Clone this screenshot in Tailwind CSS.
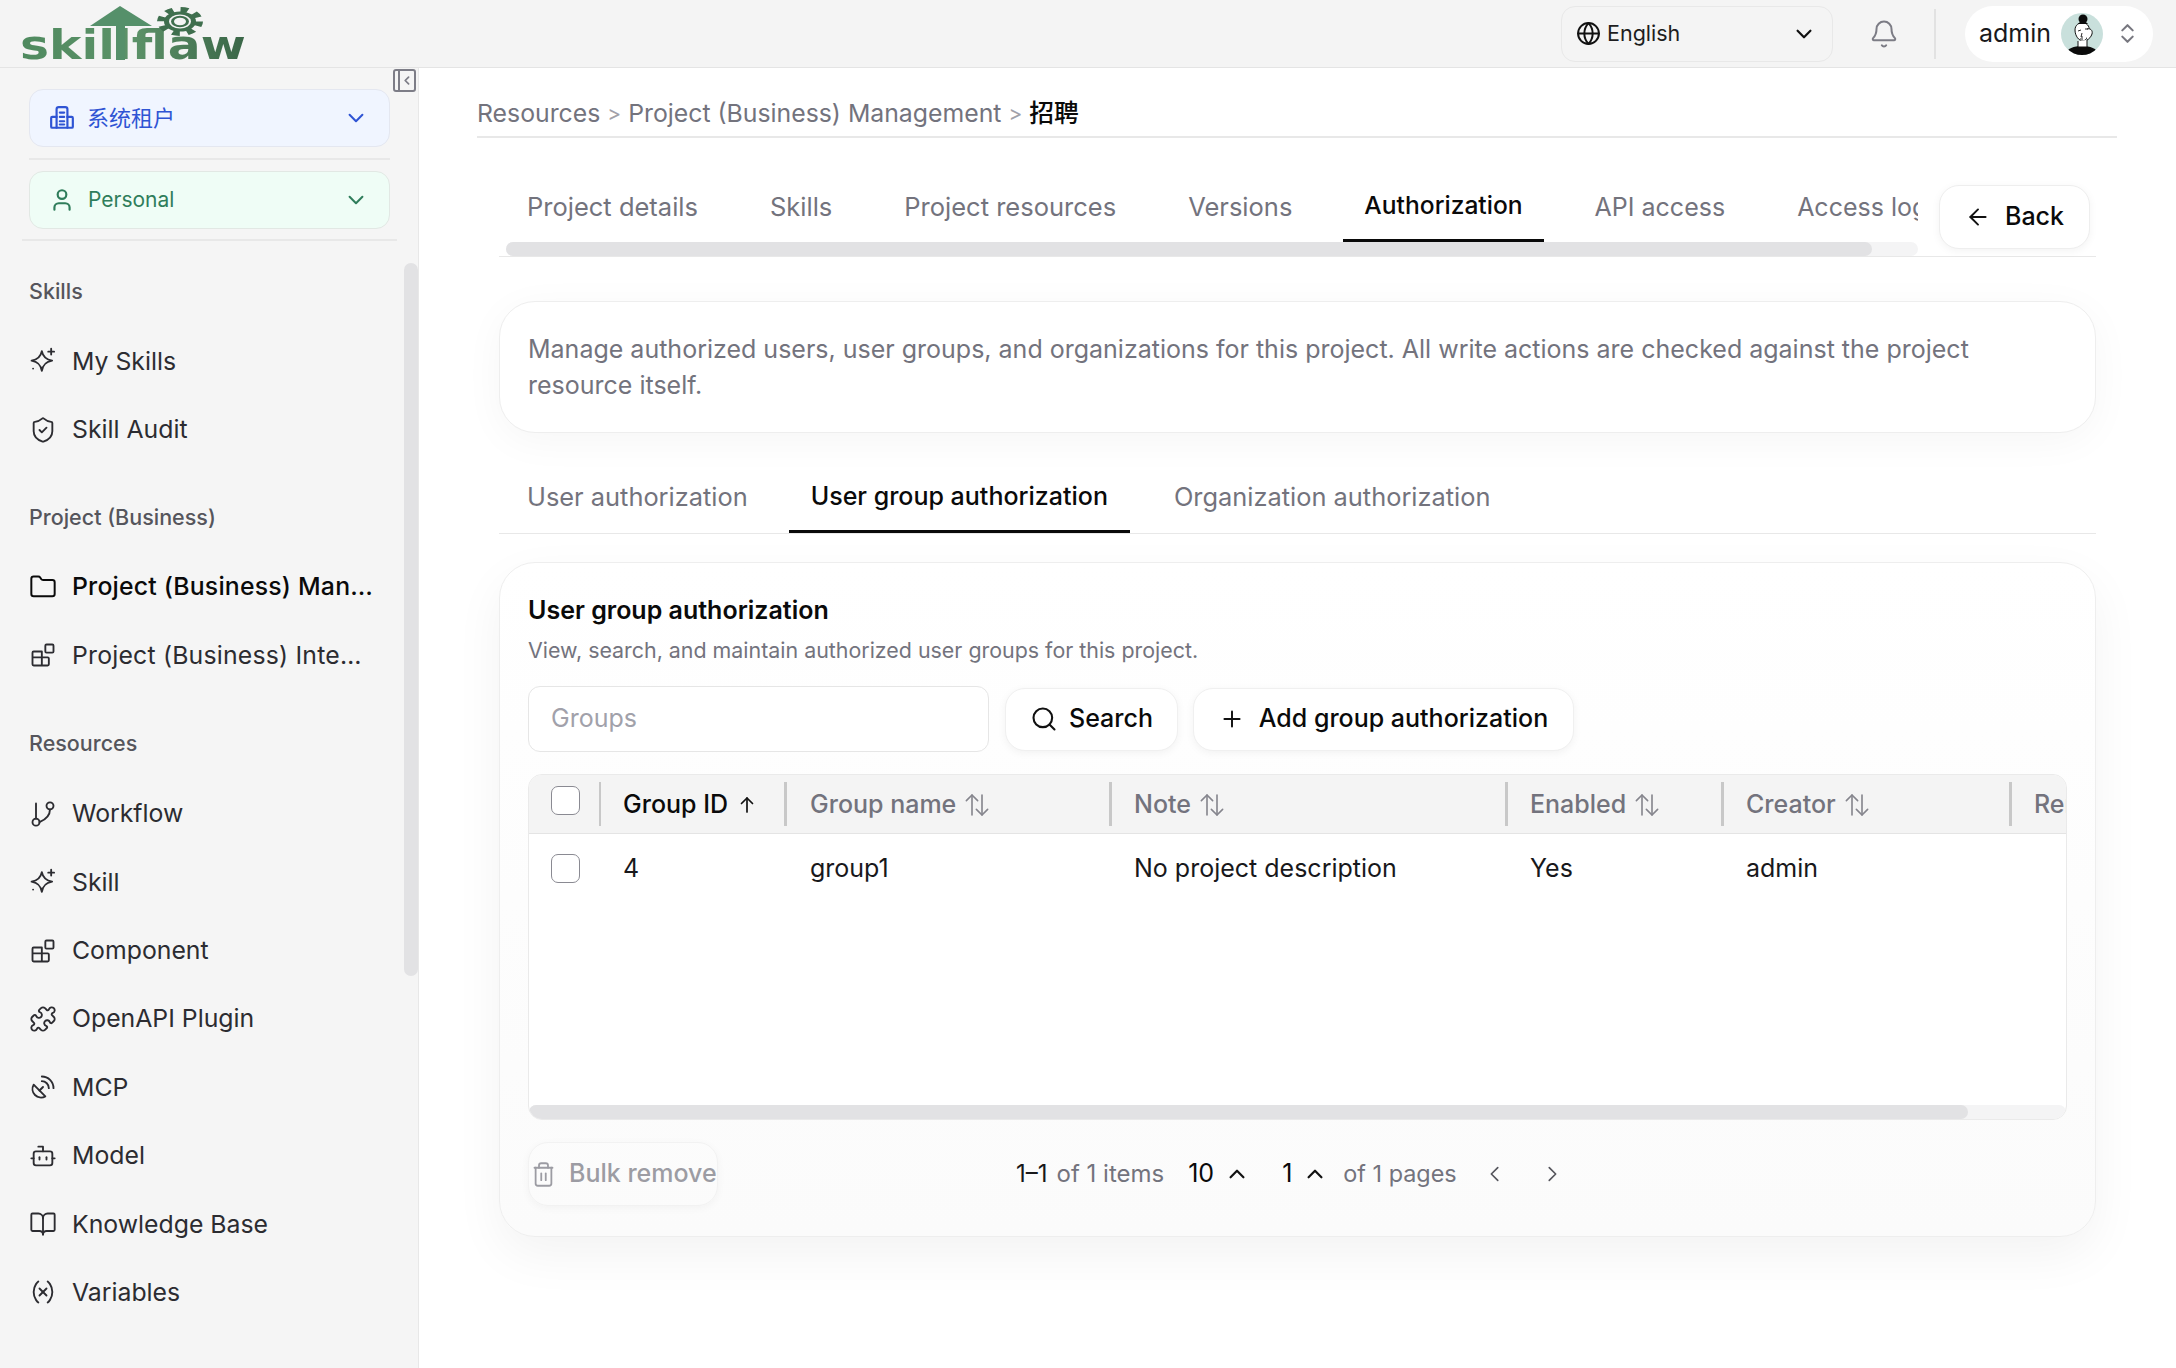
<!DOCTYPE html>
<html lang="en">
<head>
<meta charset="UTF-8">
<title>Authorization</title>
<script src="https://cdn.jsdelivr.net/npm/@tailwindcss/browser@4"></script>
</head>
<body class="h-screen overflow-hidden bg-white text-[#18181b] font-['Inter','Noto_Sans_CJK_SC',sans-serif]">

<!-- top bar -->
<header class="h-[68px] bg-[#f4f4f4] border-b border-[#e4e4e4] flex items-center relative">
  <div class="relative w-[250px] h-[67px] ml-[20px] shrink-0">
    <span class="absolute left-0 top-[20px] origin-left scale-x-[1.22] text-[40px] leading-[50px] font-bold font-['DejaVu_Sans',sans-serif] text-transparent bg-clip-text bg-gradient-to-r from-[#4f8a5f] via-[#5c9268] to-[#3a6647]">skillflaw</span>
    <svg class="absolute left-0 top-0" width="230" height="62" viewBox="0 0 230 62">
      <path d="M70 26 100 6l32 20h-27v34h-9V26z" fill="#55906a"/>
      <g transform="translate(160 21.500) scale(1 .63)" fill="none">
        <circle r="19" stroke="#3f6f4e" stroke-width="8" stroke-dasharray="7.400 7.520"/>
        <circle r="16" fill="#3f6f4e"/>
        <circle r="11" fill="#f4f4f4"/>
        <circle r="7.500" stroke="#3f6f4e" stroke-width="3"/>
      </g>
    </svg>
  </div>
  <div class="ml-auto flex items-center h-full">
    <div class="w-[272px] h-[56px] rounded-[14px] border border-[#e8e8e8] flex items-center pl-[14px] pr-[17px] text-[21.5px] text-[#1d1d20]">
      <svg class="size-[25px] mr-[6px]" viewBox="0 0 24 24" fill="none" stroke="#111" stroke-width="1.9" stroke-linecap="round" stroke-linejoin="round"><circle cx="12" cy="12" r="10"/><path d="M12 2a14.500 14.500 0 0 0 0 20 14.500 14.500 0 0 0 0-20"/><path d="M2 12h20"/></svg>
      <span>English</span>
      <svg class="size-[22px] ml-auto" viewBox="0 0 24 24" fill="none" stroke="#111" stroke-width="2.4" stroke-linecap="round" stroke-linejoin="round"><path d="m5 8.500 7 7 7-7"/></svg>
    </div>
    <svg class="size-[30px] ml-[36px]" viewBox="0 0 24 24" fill="none" stroke="#7c7c85" stroke-width="1.6" stroke-linecap="round" stroke-linejoin="round"><path d="M10.268 21a2 2 0 0 0 3.464 0"/><path d="M3.262 15.326A1 1 0 0 0 4 17h16a1 1 0 0 0 .74-1.673C19.410 13.956 18 12.499 18 8A6 6 0 0 0 6 8c0 4.499-1.411 5.956-2.738 7.326"/></svg>
    <div class="w-[2px] h-[50px] bg-[#e2e2e2] ml-[35px] mr-[29px]"></div>
    <div class="w-[188px] h-[56px] rounded-[28px] bg-white flex items-center pl-[14px] mr-[23px]">
      <span class="text-[25px] leading-none w-[82px]">admin</span>
      <svg class="size-[42px]" viewBox="0 0 42 42">
        <defs><clipPath id="av"><circle cx="21" cy="21" r="21"/></clipPath></defs>
        <g clip-path="url(#av)">
          <rect width="42" height="42" fill="#c9e0dc"/>
          <path d="M4 42c2-7 9-9 17-9s15 2 17 9z" fill="#0b0b0b"/>
          <path d="M14 17c0-5 4-8 9-7 4 1 6 4 5 9-1 4-2 8-6 9-4 0-8-5-8-11z" fill="#fff" stroke="#111" stroke-width="1"/>
          <path d="M26 16c3-1 6 1 5 5-1 3-3 5-5 6M17 28v6h9v-7" fill="#fff" stroke="#111" stroke-width="1"/>
          <path d="M17 18l3-1M24 16l3 0M21 20l-1 4 2 0M19 26l3 0" stroke="#111" stroke-width=".9" fill="none"/>
          <circle cx="22" cy="6" r="4.500" fill="#0b0b0b"/>
          <path d="M17 11c2-3 8-3 10 0z" fill="#0b0b0b"/>
        </g>
      </svg>
      <svg class="size-[25px] ml-[12px]" viewBox="0 0 24 24" fill="none" stroke="#77777f" stroke-width="2" stroke-linecap="round" stroke-linejoin="round"><path d="m7 15 5 5 5-5"/><path d="m7 9 5-5 5 5"/></svg>
    </div>
  </div>
</header>

<div class="flex h-[1300px]">
  <!-- sidebar -->
  <aside class="w-[419px] shrink-0 bg-[#f5f5f5] border-r border-[#e8e8e8] relative overflow-hidden">
    <button class="absolute right-[2px] top-[1px] size-[23px] rounded-[3px] border-2 border-[#7d7d87] flex overflow-hidden">
      <span class="w-[6px] h-full border-r-2 border-[#7d7d87]"></span>
      <svg class="size-[17px] mt-[1px]" viewBox="0 0 24 24" fill="none" stroke="#7d7d87" stroke-width="3" stroke-linecap="round" stroke-linejoin="round"><path d="m15 6-6 6 6 6"/></svg>
    </button>
    <div class="absolute right-0 top-[195px] w-[14px] h-[713px] rounded-[7px] bg-[#e2e2e4]"></div>

    <div class="ml-[29px] mr-[28px] mt-[21px] h-[58px] rounded-[14px] bg-[#f0f5ff] border border-[#e4e7f0] flex items-center pl-[19px] pr-[22px] text-[#2f54d4] text-[22px]">
      <svg class="size-[26px] mr-[12px]" viewBox="0 0 24 24" fill="none" stroke="#2f54d4" stroke-width="2" stroke-linecap="round" stroke-linejoin="round"><path d="M7 21V4a2 2 0 0 1 2-2h6a2 2 0 0 1 2 2v17"/><path d="M7 11H3a1 1 0 0 0-1 1v8a1 1 0 0 0 1 1h18a1 1 0 0 0 1-1v-8a1 1 0 0 0-1-1h-4"/><path d="M10 7h4M10 11h4M10 15h4M10 18h4"/></svg>
      <span>系统租户</span>
      <svg class="size-[22px] ml-auto" viewBox="0 0 24 24" fill="none" stroke="#2f54d4" stroke-width="2.2" stroke-linecap="round" stroke-linejoin="round"><path d="m5 8.500 7 7 7-7"/></svg>
    </div>
    <div class="ml-[29px] mr-[28px] mt-[11px] h-[2px] bg-[#e8e8e8]"></div>
    <div class="ml-[29px] mr-[28px] mt-[11px] h-[58px] rounded-[14px] bg-[#effdf6] border border-[#e2e8e4] flex items-center pl-[19px] pr-[22px] text-[#2f7d5b] text-[21px]">
      <svg class="size-[26px] mr-[13px]" viewBox="0 0 24 24" fill="none" stroke="#2f7d5b" stroke-width="2" stroke-linecap="round" stroke-linejoin="round"><path d="M19 21v-2a4 4 0 0 0-4-4H9a4 4 0 0 0-4 4v2"/><circle cx="12" cy="7" r="4"/></svg>
      <span>Personal</span>
      <svg class="size-[22px] ml-auto" viewBox="0 0 24 24" fill="none" stroke="#2f7d5b" stroke-width="2.2" stroke-linecap="round" stroke-linejoin="round"><path d="m5 8.500 7 7 7-7"/></svg>
    </div>
    <div class="ml-[22px] mr-[21px] mt-[10px] h-[2px] bg-[#e8e8e8]"></div>

    <nav class="mt-[16px] text-[24.8px] text-[#2c2c31]">
      <div class="h-[70px] pb-[2px] pl-[29px] flex items-center text-[21.5px] font-medium text-[#55555c]">Skills</div>
      <a class="h-[68.4px] pl-[29px] flex items-center gap-[15px]">
        <svg class="size-[28px]" viewBox="0 0 24 24" fill="none" stroke="currentColor" stroke-width="1.6" stroke-linecap="round" stroke-linejoin="round"><path d="M11 3.500c.9 4.800 3.300 7.200 8.800 8.200-5.500 1-7.900 3.400-8.800 8.800-.9-5.400-3.300-7.800-8.800-8.800 5.500-1 7.900-3.400 8.800-8.200z"/><path d="M19 1.500v5M16.500 4h5"/><path d="M3.500 18.500h.01"/></svg>
        <span>My Skills</span>
      </a>
      <a class="h-[68.4px] pl-[29px] flex items-center gap-[15px]">
        <svg class="size-[28px]" viewBox="0 0 24 24" fill="none" stroke="currentColor" stroke-width="1.6" stroke-linecap="round" stroke-linejoin="round"><path d="M20 13c0 5-3.500 7.500-7.660 8.950a1 1 0 0 1-.67-.01C7.500 20.500 4 18 4 13V6a1 1 0 0 1 1-1c2 0 4.500-1.200 6.240-2.720a1.170 1.170 0 0 1 1.520 0C14.510 3.810 17 5 19 5a1 1 0 0 1 1 1z"/><path d="m9 12 2 2 4-4"/></svg>
        <span>Skill Audit</span>
      </a>

      <div class="mt-[19px] h-[70px] pb-[2px] pl-[29px] flex items-center text-[21.5px] font-medium text-[#55555c]">Project (Business)</div>
      <a class="h-[68.4px] pl-[29px] flex items-center gap-[15px] font-medium text-[#0a0a0a]">
        <svg class="size-[28px]" viewBox="0 0 24 24" fill="none" stroke="currentColor" stroke-width="1.7" stroke-linecap="round" stroke-linejoin="round"><path d="M20 20a2 2 0 0 0 2-2V8a2 2 0 0 0-2-2h-7.900a2 2 0 0 1-1.690-.9L9.600 3.900A2 2 0 0 0 7.930 3H4a2 2 0 0 0-2 2v13a2 2 0 0 0 2 2Z"/></svg>
        <span class="w-[304px] truncate tracking-[0.2px]">Project (Business) Management</span>
      </a>
      <a class="h-[68.4px] pl-[29px] flex items-center gap-[15px]">
        <svg class="size-[28px]" viewBox="0 0 24 24" fill="none" stroke="currentColor" stroke-width="1.6" stroke-linecap="round" stroke-linejoin="round"><path d="M11 21V9H4a1 1 0 0 0-1 1v10a1 1 0 0 0 1 1h12a1 1 0 0 0 1-1v-5a1 1 0 0 0-1-1H3"/><rect x="14" y="3" width="7" height="7" rx="1"/></svg>
        <span class="w-[290px] truncate tracking-[0.2px]">Project (Business) Integration</span>
      </a>

      <div class="mt-[20px] h-[70px] pb-[2px] pl-[29px] flex items-center text-[21.5px] font-medium text-[#55555c]">Resources</div>
      <a class="h-[68.4px] pl-[29px] flex items-center gap-[15px]">
        <svg class="size-[28px]" viewBox="0 0 24 24" fill="none" stroke="currentColor" stroke-width="1.6" stroke-linecap="round" stroke-linejoin="round"><circle cx="6" cy="19" r="3"/><circle cx="18" cy="5" r="3"/><path d="M6 16V3"/><path d="M18 8c0 5-4 9-9 11"/></svg>
        <span>Workflow</span>
      </a>
      <a class="h-[68.4px] pl-[29px] flex items-center gap-[15px]">
        <svg class="size-[28px]" viewBox="0 0 24 24" fill="none" stroke="currentColor" stroke-width="1.6" stroke-linecap="round" stroke-linejoin="round"><path d="M11 3.500c.9 4.800 3.300 7.200 8.800 8.200-5.500 1-7.900 3.400-8.800 8.800-.9-5.400-3.300-7.800-8.800-8.800 5.500-1 7.900-3.400 8.800-8.200z"/><path d="M19 1.500v5M16.500 4h5"/><path d="M3.500 18.500h.01"/></svg>
        <span>Skill</span>
      </a>
      <a class="h-[68.4px] pl-[29px] flex items-center gap-[15px]">
        <svg class="size-[28px]" viewBox="0 0 24 24" fill="none" stroke="currentColor" stroke-width="1.6" stroke-linecap="round" stroke-linejoin="round"><path d="M11 21V9H4a1 1 0 0 0-1 1v10a1 1 0 0 0 1 1h12a1 1 0 0 0 1-1v-5a1 1 0 0 0-1-1H3"/><rect x="14" y="3" width="7" height="7" rx="1"/></svg>
        <span>Component</span>
      </a>
      <a class="h-[68.4px] pl-[29px] flex items-center gap-[15px]">
        <svg class="size-[28px]" viewBox="0 0 24 24" fill="none" stroke="currentColor" stroke-width="1.6" stroke-linecap="round" stroke-linejoin="round"><path d="M19.439 7.850c-.049.322.059.648.289.878l1.568 1.568c.47.47.706 1.087.706 1.704s-.235 1.233-.706 1.704l-1.611 1.611a.98.98 0 0 1-.837.276c-.47-.07-.802-.48-.968-.925a2.501 2.501 0 1 0-3.214 3.214c.446.166.855.497.925.968a.979.979 0 0 1-.276.837l-1.610 1.610a2.404 2.404 0 0 1-1.705.707 2.402 2.402 0 0 1-1.704-.706l-1.568-1.568a1.026 1.026 0 0 0-.877-.29c-.493.074-.84.504-1.020.968a2.500 2.500 0 1 1-3.237-3.237c.464-.18.894-.527.967-1.020a1.026 1.026 0 0 0-.289-.877l-1.568-1.568A2.402 2.402 0 0 1 1.998 12c0-.617.236-1.234.706-1.704L4.230 8.770c.24-.24.581-.353.917-.303.515.077.877.528 1.073 1.010a2.500 2.500 0 1 0 3.259-3.259c-.482-.196-.933-.558-1.010-1.073-.05-.336.062-.676.303-.917l1.525-1.525A2.402 2.402 0 0 1 12 1.998c.617 0 1.234.236 1.704.706l1.568 1.568c.23.23.556.338.877.29.493-.074.84-.504 1.020-.968a2.500 2.500 0 1 1 3.237 3.237c-.464.18-.894.527-.967 1.020Z"/></svg>
        <span>OpenAPI Plugin</span>
      </a>
      <a class="h-[68.4px] pl-[29px] flex items-center gap-[15px]">
        <svg class="size-[28px]" viewBox="0 0 24 24" fill="none" stroke="currentColor" stroke-width="1.6" stroke-linecap="round" stroke-linejoin="round"><path d="M4 10a7.310 7.310 0 0 0 10 10Z"/><path d="m9 15 3-3"/><path d="M17 13a6 6 0 0 0-6-6"/><path d="M21 13A10 10 0 0 0 11 3"/></svg>
        <span>MCP</span>
      </a>
      <a class="h-[68.4px] pl-[29px] flex items-center gap-[15px]">
        <svg class="size-[28px]" viewBox="0 0 24 24" fill="none" stroke="currentColor" stroke-width="1.6" stroke-linecap="round" stroke-linejoin="round"><path d="M12 8V4H8"/><rect x="4" y="8" width="16" height="12" rx="2"/><path d="M2 14h2"/><path d="M20 14h2"/><path d="M15 13v2"/><path d="M9 13v2"/></svg>
        <span>Model</span>
      </a>
      <a class="h-[68.4px] pl-[29px] flex items-center gap-[15px]">
        <svg class="size-[28px]" viewBox="0 0 24 24" fill="none" stroke="currentColor" stroke-width="1.6" stroke-linecap="round" stroke-linejoin="round"><path d="M12 7v14"/><path d="M3 18a1 1 0 0 1-1-1V4a1 1 0 0 1 1-1h5a4 4 0 0 1 4 4 4 4 0 0 1 4-4h5a1 1 0 0 1 1 1v13a1 1 0 0 1-1 1h-6a3 3 0 0 0-3 3 3 3 0 0 0-3-3z"/></svg>
        <span>Knowledge Base</span>
      </a>
      <a class="h-[68.4px] pl-[29px] flex items-center gap-[15px]">
        <svg class="size-[28px]" viewBox="0 0 24 24" fill="none" stroke="currentColor" stroke-width="1.6" stroke-linecap="round" stroke-linejoin="round"><path d="M8 21s-4-3-4-9 4-9 4-9"/><path d="M16 3s4 3 4 9-4 9-4 9"/><path d="M15 9l-6 6"/><path d="M9 9l6 6"/></svg>
        <span>Variables</span>
      </a>
    </nav>
  </aside>

  <!-- main -->
  <main class="flex-1 min-w-0 pl-[58px] pr-[59px]">
    <div class="h-[70px] border-b-2 border-[#e8e8e8] flex items-center gap-[7px] pt-[23px] text-[24.8px] text-[#73737d]">
      <span>Resources</span><span class="text-[21px] text-[#a1a1aa]">&gt;</span><span>Project (Business) Management</span><span class="text-[21px] text-[#a1a1aa]">&gt;</span><span class="text-[#0a0a0a] font-medium">招聘</span>
    </div>

    <div class="ml-[22px] mr-[21px]">
      <!-- page tabs -->
      <div class="h-[119px] border-b border-[#e8e8e8] flex items-end">
        <div class="w-[1412px] ml-[7px] overflow-hidden shrink-0">
          <div class="flex gap-[30px] text-[25.5px] text-[#73737d] whitespace-nowrap">
            <div class="px-[21px] h-[74px] flex items-center pt-[5px]">Project details</div>
            <div class="px-[21px] h-[74px] flex items-center pt-[5px]">Skills</div>
            <div class="px-[21px] h-[74px] flex items-center pt-[5px]">Project resources</div>
            <div class="px-[21px] h-[74px] flex items-center pt-[5px]">Versions</div>
            <div class="px-[21px] h-[74px] flex items-center pt-[3px] border-b-[3px] border-[#0a0a0a] font-medium text-[24.6px] text-[#0a0a0a]">Authorization</div>
            <div class="px-[21px] h-[74px] flex items-center pt-[5px] text-[25px]">API access</div>
            <div class="px-[21px] h-[74px] flex items-center pt-[5px] text-[25px]">Access logs</div>
          </div>
          <div class="h-[14px] rounded-[7px] bg-[#f4f4f5]"><div class="w-[1366px] h-full rounded-[7px] bg-[#e2e2e4]"></div></div>
        </div>
        <button class="ml-[21px] mb-[7px] w-[151px] h-[64px] rounded-[20px] border border-[#eeeeee] bg-white shadow-[0_2px_8px_rgba(0,0,0,0.05)] flex items-center justify-center gap-[14px] text-[25px] font-medium text-[#0a0a0a]">
          <svg class="size-[26px]" viewBox="0 0 24 24" fill="none" stroke="#111" stroke-width="1.8" stroke-linecap="round" stroke-linejoin="round"><path d="m12 19-7-7 7-7"/><path d="M19 12H5"/></svg>
          <span>Back</span>
        </button>
      </div>

      <!-- description -->
      <div class="mt-[44px] h-[132px] rounded-[36px] border border-[#eeeeee] bg-white shadow-[0_8px_40px_rgba(0,0,0,0.04)] px-[28px] flex items-center text-[25px] leading-[36px] text-[#73737d]">
        <p>Manage authorized users, user groups, and organizations for this project. All write actions are checked against the project resource itself.</p>
      </div>

      <!-- sub tabs -->
      <div class="mt-[28px] h-[73px] border-b border-[#e8e8e8] flex gap-[22px] pl-[6px] text-[25.4px] text-[#73737d]">
        <div class="pl-[22px] pr-[19px] flex items-center">User authorization</div>
        <div class="px-[22px] flex items-center pt-[3px] border-b-[3px] border-[#0a0a0a] font-medium text-[25px] text-[#0a0a0a]">User group authorization</div>
        <div class="px-[22px] flex items-center">Organization authorization</div>
      </div>

      <!-- card -->
      <section class="mt-[28px] h-[675px] rounded-[36px] border border-[#eeeeee] bg-linear-to-b from-white to-[#fbfbfb] shadow-[0_18px_50px_rgba(0,0,0,0.05)] px-[28px]">
        <h2 class="pt-[29px] text-[25px] leading-[36px] font-semibold text-[#0a0a0a]">User group authorization</h2>
        <p class="mt-[6px] text-[21.4px] leading-[32px] text-[#73737d]">View, search, and maintain authorized user groups for this project.</p>

        <div class="mt-[20px] flex items-center">
          <div class="w-[461px] h-[66px] rounded-[12px] border border-[#e6e6e6] bg-white flex items-center pl-[22px] text-[25px] text-[#a1a1aa]">Groups</div>
          <button class="ml-[16px] w-[173px] h-[63px] rounded-[20px] border border-[#f0f0f0] bg-white shadow-[0_2px_8px_rgba(0,0,0,0.05)] flex items-center justify-center gap-[11px] text-[25px] font-medium text-[#0a0a0a]">
            <svg class="size-[28px]" viewBox="0 0 24 24" fill="none" stroke="#111" stroke-width="1.8" stroke-linecap="round" stroke-linejoin="round"><circle cx="11" cy="11" r="8"/><path d="m21 21-4.300-4.300"/></svg>
            <span>Search</span>
          </button>
          <button class="ml-[15px] w-[381px] h-[63px] rounded-[20px] border border-[#f0f0f0] bg-white shadow-[0_2px_8px_rgba(0,0,0,0.05)] flex items-center justify-center gap-[14px] text-[25px] font-medium text-[#0a0a0a]">
            <svg class="size-[26px]" viewBox="0 0 24 24" fill="none" stroke="#111" stroke-width="1.8" stroke-linecap="round" stroke-linejoin="round"><path d="M5 12h14"/><path d="M12 5v14"/></svg>
            <span>Add group authorization</span>
          </button>
        </div>

        <!-- table -->
        <div class="mt-[22px] h-[346px] w-[1539px] rounded-[14px] border border-[#eaeaea] overflow-hidden flex flex-col text-[25px] bg-white">
          <div class="h-[59px] shrink-0 bg-[#f4f4f4] border-b border-[#e4e4e4] grid grid-cols-[72px_186px_325px_396px_216px_288px_60px] items-center text-[#73737d] whitespace-nowrap">
            <div class="h-[44px] border-r-2 border-[#c8c8c8] flex items-start pl-[22px] pt-[4px]"><span class="block size-[29px] rounded-[7px] border border-[#8a8a92] bg-white"></span></div>
            <div class="h-[44px] border-r-[3px] border-[#c8c8c8] flex items-center pl-[22px] pt-[2px] gap-[9px] font-medium text-[#0a0a0a]">Group ID
              <svg class="size-[20px]" viewBox="0 0 20 20" fill="none" stroke="#111" stroke-width="1.7" stroke-linecap="round" stroke-linejoin="round"><path d="M10 17V3"/><path d="m4.500 8.500 5.500-5.500 5.500 5.500"/></svg>
            </div>
            <div class="h-[44px] border-r-[3px] border-[#c8c8c8] flex items-center pl-[23px] pt-[2px] gap-[6px] font-medium">Group name
              <svg class="size-[30px]" viewBox="0 0 24 24" fill="none" stroke="#85858d" stroke-width="1.300" stroke-linecap="round" stroke-linejoin="round"><path d="M8 20V4"/><path d="m3.500 8.500 4.500-4.500 4.500 4.500"/><path d="M16 4v16"/><path d="m11.500 15.500 4.500 4.500 4.500-4.500"/></svg>
            </div>
            <div class="h-[44px] border-r-[3px] border-[#c8c8c8] flex items-center pl-[22px] pt-[2px] gap-[6px] font-medium">Note
              <svg class="size-[30px]" viewBox="0 0 24 24" fill="none" stroke="#85858d" stroke-width="1.300" stroke-linecap="round" stroke-linejoin="round"><path d="M8 20V4"/><path d="m3.500 8.500 4.500-4.500 4.500 4.500"/><path d="M16 4v16"/><path d="m11.500 15.500 4.500 4.500 4.500-4.500"/></svg>
            </div>
            <div class="h-[44px] border-r-[3px] border-[#c8c8c8] flex items-center pl-[22px] pt-[2px] gap-[6px] font-medium">Enabled
              <svg class="size-[30px]" viewBox="0 0 24 24" fill="none" stroke="#85858d" stroke-width="1.300" stroke-linecap="round" stroke-linejoin="round"><path d="M8 20V4"/><path d="m3.500 8.500 4.500-4.500 4.500 4.500"/><path d="M16 4v16"/><path d="m11.500 15.500 4.500 4.500 4.500-4.500"/></svg>
            </div>
            <div class="h-[44px] border-r-[3px] border-[#c8c8c8] flex items-center pl-[22px] pt-[2px] gap-[6px] font-medium">Creator
              <svg class="size-[30px]" viewBox="0 0 24 24" fill="none" stroke="#85858d" stroke-width="1.300" stroke-linecap="round" stroke-linejoin="round"><path d="M8 20V4"/><path d="m3.500 8.500 4.500-4.500 4.500 4.500"/><path d="M16 4v16"/><path d="m11.500 15.500 4.500 4.500 4.500-4.500"/></svg>
            </div>
            <div class="h-[44px] flex items-center pl-[22px] pt-[2px] font-medium">Remark</div>
          </div>
          <div class="h-[69px] grid grid-cols-[72px_186px_325px_396px_216px_288px_60px] items-center text-[#18181b]">
            <div class="pl-[22px]"><span class="block size-[29px] rounded-[7px] border border-[#8a8a92] bg-white"></span></div>
            <div class="pl-[22px]">4</div>
            <div class="pl-[23px]">group1</div>
            <div class="pl-[22px]">No project description</div>
            <div class="pl-[22px]">Yes</div>
            <div class="pl-[22px]">admin</div>
          </div>
          <div class="mt-auto h-[14px] rounded-[7px] bg-[#f4f4f5]"><div class="w-[1439px] h-full rounded-[7px] bg-[#e2e2e4]"></div></div>
        </div>

        <!-- footer -->
        <div class="mt-[22px] flex items-center">
          <button class="w-[190px] h-[64px] rounded-[20px] border border-[#f2f2f2] shadow-[0_2px_8px_rgba(0,0,0,0.04)] flex items-center text-[25px] text-[#9c9ca3] font-medium whitespace-nowrap overflow-hidden">
            <svg class="size-[27px] ml-[1px] mr-[12px] shrink-0" viewBox="0 0 24 24" fill="none" stroke="#9c9ca3" stroke-width="1.6" stroke-linecap="round" stroke-linejoin="round"><path d="M4 6h16"/><path d="M19 6v14a2 2 0 0 1-2 2H7a2 2 0 0 1-2-2V6"/><path d="M8 6V4a2 2 0 0 1 2-2h4a2 2 0 0 1 2 2v2"/><path d="M10 11v6"/><path d="M14 11v6"/></svg>
            <span>Bulk remove</span>
          </button>
          <div class="ml-[298px] flex items-center text-[24px] text-[#73737d] whitespace-nowrap">
            <span class="text-[#18181b]">1–1</span><span class="ml-[9px]">of 1 items</span>
            <span class="ml-[24px] text-[#0a0a0a] text-[25px]">10</span>
            <svg class="size-[22px] ml-[12px]" viewBox="0 0 24 24" fill="none" stroke="#111" stroke-width="2.4" stroke-linecap="round" stroke-linejoin="round"><path d="m5 15.500 7-7 7 7"/></svg>
            <span class="ml-[34px] text-[#0a0a0a] text-[25px]">1</span>
            <svg class="size-[22px] ml-[12px]" viewBox="0 0 24 24" fill="none" stroke="#111" stroke-width="2.4" stroke-linecap="round" stroke-linejoin="round"><path d="m5 15.500 7-7 7 7"/></svg>
            <span class="ml-[17px] text-[23.4px]">of 1 pages</span>
            <svg class="size-[22px] ml-[27px]" viewBox="0 0 24 24" fill="none" stroke="#55555c" stroke-width="1.8" stroke-linecap="round" stroke-linejoin="round"><path d="m15 5-7 7 7 7"/></svg>
            <svg class="size-[22px] ml-[35px]" viewBox="0 0 24 24" fill="none" stroke="#55555c" stroke-width="1.8" stroke-linecap="round" stroke-linejoin="round"><path d="m9 5 7 7-7 7"/></svg>
          </div>
        </div>
      </section>
    </div>
  </main>
</div>
</body>
</html>
